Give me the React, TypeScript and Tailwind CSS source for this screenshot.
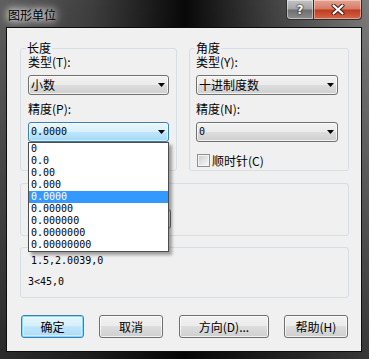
import React from "react";

const cjk = "font-['Noto_Sans_CJK_SC',sans-serif]";
const mono = "font-['DejaVu_Sans_Mono','Noto_Sans_CJK_SC',monospace]";

const precisionList = [
  "0",
  "0.0",
  "0.00",
  "0.000",
  "0.0000",
  "0.00000",
  "0.000000",
  "0.0000000",
  "0.00000000",
];

function Arrow() {
  return (
    <svg width="7" height="4" viewBox="0 0 7 4" className="shrink-0">
      <path d="M0 0h7L3.5 4z" fill="#000" />
    </svg>
  );
}

interface ComboProps {
  value: string;
  width: string;
  focused?: boolean;
  numeric?: boolean;
}

function Combo({ value, width, focused, numeric }: ComboProps) {
  return (
    <div
      className={`flex items-center h-[20px] rounded-[3px] border pl-[2px] pr-[3px] ${width} ${
        focused
          ? "border-[#3c7fb1] bg-[linear-gradient(180deg,#eaf6fd_0%,#d9f0fc_50%,#bee6fd_50%,#a7d9f5_100%)] shadow-[inset_0_0_0_1px_rgba(255,255,255,0.5)]"
          : "border-[#707070] bg-[linear-gradient(180deg,#f2f2f2_0%,#ebebeb_50%,#dddddd_50%,#cfcfcf_100%)] shadow-[inset_0_0_0_1px_rgba(255,255,255,0.7)]"
      }`}
    >
      <span
        className={`flex-1 leading-[12px] text-black ${
          numeric ? `${mono} text-[10px]` : `${cjk} text-[12px]`
        }`}
      >
        {value}
      </span>
      <Arrow />
    </div>
  );
}

interface ButtonProps {
  label: string;
  width: string;
  primary?: boolean;
}

function DlgButton({ label, width, primary }: ButtonProps) {
  return (
    <div
      className={`flex items-center justify-center h-[23px] rounded-[3px] border text-[12px] leading-[12px] text-black ${cjk} ${width} ${
        primary
          ? "border-[#3c7fb1] bg-[linear-gradient(180deg,#e5f5fd_0%,#d6effc_50%,#c0e6fa_50%,#acdcf5_100%)] shadow-[inset_0_0_0_1px_#7fdcff,inset_0_0_0_2px_rgba(255,255,255,0.4)]"
          : "border-[#707070] bg-[linear-gradient(180deg,#f2f2f2_0%,#ebebeb_50%,#dddddd_50%,#cfcfcf_100%)] shadow-[inset_0_0_0_1px_rgba(255,255,255,0.7)]"
      }`}
    >
      {label}
    </div>
  );
}

export default function App() {
  return (
    <div className="w-[369px] h-[359px] flex flex-col bg-[linear-gradient(180deg,rgba(0,0,0,0)_0%,rgba(0,0,0,0.55)_100%),linear-gradient(90deg,#5e5e5e_0%,#3e3e3e_25%,#080808_50%,#3e3e3e_72%,#7c7c7c_100%)]">
      {/* TITLE BAR */}
      <div className="h-[27px] flex items-start shrink-0">
        <span
          className={`ml-[8px] mt-[9px] text-[12px] leading-[12px] text-black ${cjk} [text-shadow:0_0_6px_#fff,0_0_10px_rgba(255,255,255,0.9),0_0_14px_rgba(255,255,255,0.7)]`}
        >
          图形单位
        </span>
        <div className="ml-auto mr-[7px] flex">
          <div className="w-[28px] h-[20px] flex items-center justify-center border border-[#2e2e2e] border-t-0 rounded-bl-[4px] bg-[linear-gradient(180deg,#c4c4c4_0%,#a3a3a3_48%,#6d6d6d_52%,#8e8e8e_100%)] shadow-[inset_0_0_0_1px_rgba(255,255,255,0.45)]">
            <span className="font-['DejaVu_Sans',sans-serif] font-bold text-[12px] leading-[12px] text-white [text-shadow:0_0_2px_#000,0_0_1px_#000]">
              ?
            </span>
          </div>
          <div className="w-[48px] h-[20px] flex items-center justify-center border border-[#2e2e2e] border-t-0 border-l-0 rounded-br-[4px] bg-[linear-gradient(180deg,#e6a392_0%,#d47b66_48%,#c0391e_52%,#d5684b_100%)] shadow-[inset_0_0_0_1px_rgba(255,255,255,0.4)]">
            <svg width="14" height="11" viewBox="0 0 14 11">
              <path d="M2.5 1.5l9 8M11.5 1.5l-9 8" stroke="#3a1a12" strokeWidth="4" strokeLinecap="round" />
              <path d="M2.5 1.5l9 8M11.5 1.5l-9 8" stroke="#fff" strokeWidth="2.2" strokeLinecap="round" />
            </svg>
          </div>
        </div>
      </div>

      {/* CLIENT AREA */}
      <div className="relative ml-[6px] w-[356px] h-[325px] border border-[#0c0c0c] bg-[#f0f0f0] pl-[13px]">
        <div className="flex gap-[12px] mt-[14px]">
          {/* LENGTH */}
          <fieldset className="w-[157px] h-[129px] border border-[#d5dfe5] rounded-[3px] pl-[7px] pr-[7px]">
            <legend className={`-ml-[2px] px-[1px] text-[12px] leading-[12px] ${cjk}`}>长度</legend>
            <div className={`mt-[2px] text-[12px] leading-[12px] ${cjk}`}>类型(T):</div>
            <div className="mt-[7px]">
              <Combo value="小数" width="w-[141px]" />
            </div>
            <div className={`mt-[8px] text-[12px] leading-[12px] ${cjk}`}>精度(P):</div>
            <div className="mt-[7px]">
              <Combo value="0.0000" width="w-[141px]" focused numeric />
            </div>
          </fieldset>

          {/* ANGLE */}
          <fieldset className="w-[160px] h-[129px] border border-[#d5dfe5] rounded-[3px] pl-[6px] pr-[10px]">
            <legend className={`px-[1px] -ml-[1px] text-[12px] leading-[12px] ${cjk}`}>角度</legend>
            <div className={`mt-[2px] text-[12px] leading-[12px] ${cjk}`}>类型(Y):</div>
            <div className="mt-[7px]">
              <Combo value="十进制度数" width="w-[142px]" />
            </div>
            <div className={`mt-[8px] text-[12px] leading-[12px] ${cjk}`}>精度(N):</div>
            <div className="mt-[7px]">
              <Combo value="0" width="w-[142px]" numeric />
            </div>
            <div className="mt-[12px] flex items-center gap-[2px] ml-[1px]">
              <div className="w-[13px] h-[13px] border border-[#8e8f8f] bg-[#f4f4f4] flex items-center justify-center">
                <div className="w-[9px] h-[9px] bg-[linear-gradient(135deg,#cbcfd5_0%,#e6e7e9_60%,#f7f7f7_100%)]" />
              </div>
              <span className={`text-[12px] leading-[12px] ${cjk}`}>顺时针(C)</span>
            </div>
          </fieldset>
        </div>

        {/* INSERTION SCALE (covered by the open list) */}
        <div className="mt-[12px] w-[329px] h-[53px] border border-[#d5dfe5] rounded-[3px] pl-[7px] pt-[25px]">
          <Combo value="" width="w-[143px]" />
        </div>

        {/* SAMPLE OUTPUT */}
        <div className={`mt-[11px] w-[329px] h-[51px] border border-[#d5dfe5] rounded-[3px] pl-[7px] pt-[7px] ${mono} text-[10px] leading-[12px] text-black`}>
          <div className="ml-[3px]">1.5,2.0039,0</div>
          <div className="mt-[9px]">3&lt;45,0</div>
        </div>

        {/* BUTTONS */}
        <div className="flex mt-[17px] ml-[1px]">
          <DlgButton label="确定" width="w-[63px]" primary />
          <div className="ml-[15px]">
            <DlgButton label="取消" width="w-[64px]" />
          </div>
          <div className="ml-[16px]">
            <DlgButton label="方向(D)..." width="w-[90px]" />
          </div>
          <div className="ml-[15px]">
            <DlgButton label="帮助(H)" width="w-[64px]" />
          </div>
        </div>

        {/* OPEN DROPDOWN LIST */}
        <div className="absolute left-[21px] top-[114px] w-[141px] h-[110px] border border-[#4d4d4d] bg-white shadow-[3px_3px_3px_rgba(0,0,0,0.35)]">
          {precisionList.map((item, index) => (
            <div
              key={item}
              className={`h-[12px] pl-[2px] ${mono} text-[10px] leading-[12px] ${
                index === 4 ? "bg-[#3399ff] text-white" : "text-black"
              }`}
            >
              {item}
            </div>
          ))}
        </div>
      </div>
    </div>
  );
}
